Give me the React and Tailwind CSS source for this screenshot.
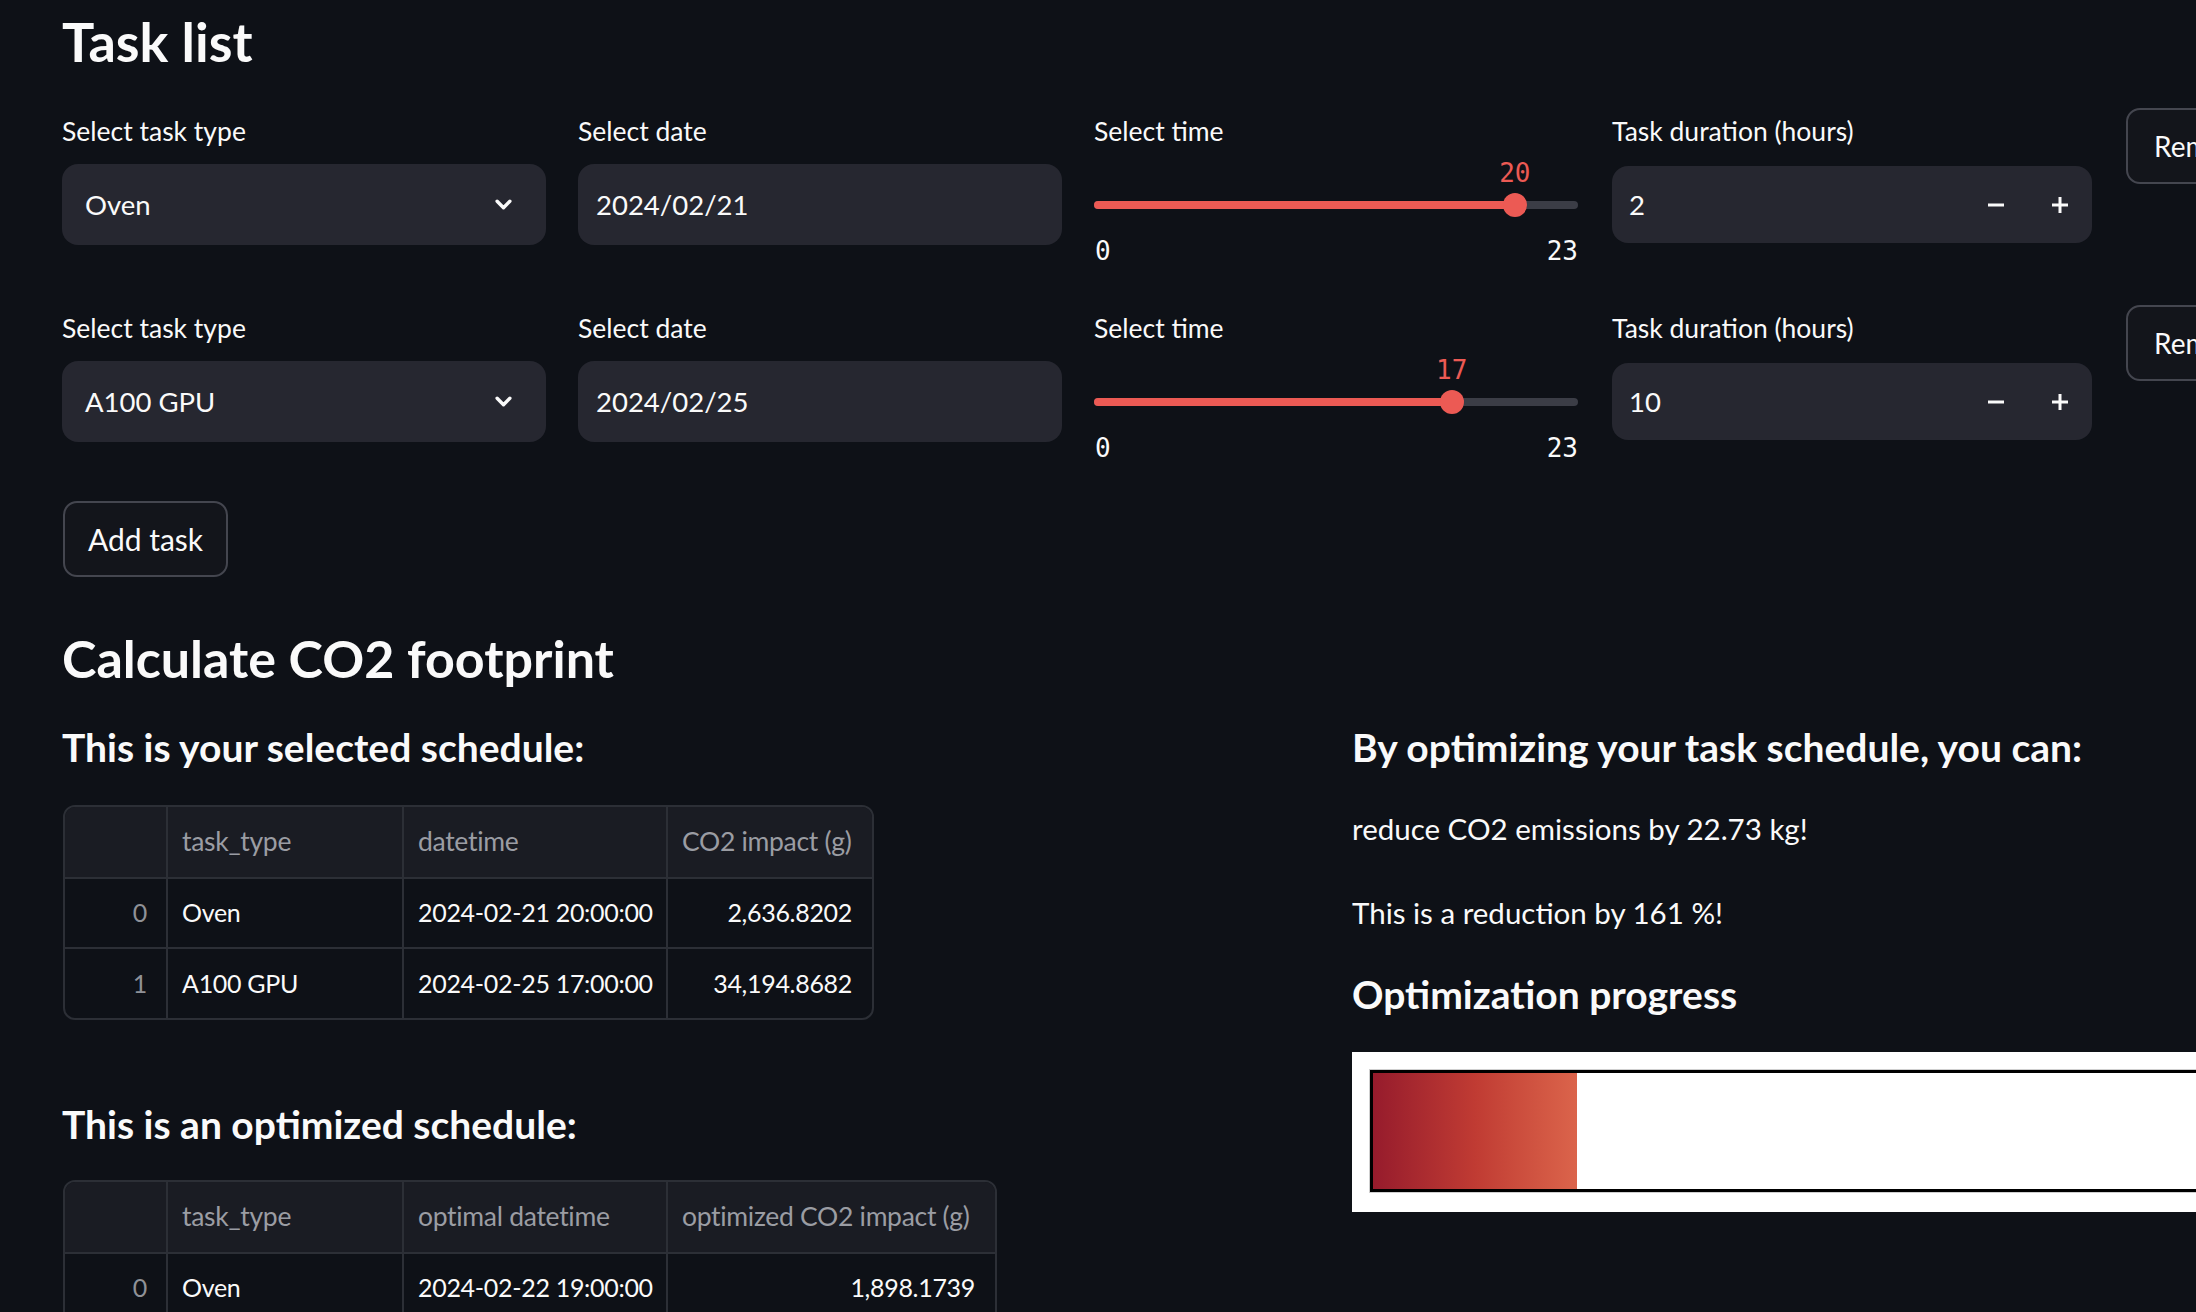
import React from "react";

const tasks = [
  { type: "Oven", date: "2024/02/21", time: 20, duration: 2 },
  { type: "A100 GPU", date: "2024/02/25", time: 17, duration: 10 },
];

const selectedCols = [
  { label: "", width: "w-[102px]", index: true },
  { label: "task_type", width: "w-[236px]" },
  { label: "datetime", width: "w-[264px]" },
  { label: "CO2 impact (g)", width: "w-[205px]", numeric: true },
];

const selectedRows = [
  ["0", "Oven", "2024-02-21 20:00:00", "2,636.8202"],
  ["1", "A100 GPU", "2024-02-25 17:00:00", "34,194.8682"],
];

const optimizedCols = [
  { label: "", width: "w-[102px]", index: true },
  { label: "task_type", width: "w-[236px]" },
  { label: "optimal datetime", width: "w-[264px]" },
  { label: "optimized CO2 impact (g)", width: "w-[328px]", numeric: true },
];

const optimizedRows = [
  ["0", "Oven", "2024-02-22 19:00:00", "1,898.1739"],
  ["1", "A100 GPU", "2024-02-26 03:00:00", "12,203.5145"],
];

function ChevronDown() {
  return (
    <svg viewBox="0 0 16 10" className="w-[17px] h-[11px]" fill="none" stroke="#fafafa" strokeWidth="3.2" strokeLinecap="round" strokeLinejoin="round">
      <path d="M2 2l6 6 6-6" />
    </svg>
  );
}

function MinusIcon() {
  return (
    <svg viewBox="0 0 16 16" className="w-[16px] h-[16px]" fill="#fafafa">
      <rect x="0" y="6.5" width="16" height="3" />
    </svg>
  );
}

function PlusIcon() {
  return (
    <svg viewBox="0 0 16 16" className="w-[16px] h-[16px]" fill="#fafafa">
      <rect x="0" y="6.5" width="16" height="3" />
      <rect x="6.5" y="0" width="3" height="16" />
    </svg>
  );
}

function Label({ children }) {
  return <div className="h-[40px] leading-[40px] text-[26.5px] whitespace-nowrap">{children}</div>;
}

function TimeSlider({ value, min = 0, max = 23 }) {
  const pct = ((value - min) / (max - min)) * 100;
  return (
    <div className="relative h-[120px] font-['DejaVu_Sans_Mono',monospace] text-[26px] leading-[30px]">
      <div className="absolute top-[7px] -translate-x-1/2 text-[#ec5a54]" style={{ left: `${pct}%` }}>
        {value}
      </div>
      <div className="absolute top-[50px] left-0 right-0 h-[8px] rounded-full bg-[#3b3d46]">
        <div className="h-full rounded-full bg-[#ec5a54]" style={{ width: `${pct}%` }} />
      </div>
      <div
        className="absolute top-[42px] w-[24px] h-[24px] -translate-x-1/2 rounded-full bg-[#ec5a54]"
        style={{ left: `${pct}%` }}
      />
      <div className="absolute top-[85px] left-[1px]">{min}</div>
      <div className="absolute top-[85px] right-0">{max}</div>
    </div>
  );
}

function TaskRow({ task }) {
  return (
    <div className="grid grid-cols-[484px_484px_484px_484px_484px] gap-[32px] items-start">
      <div>
        <Label>Select task type</Label>
        <div className="mt-[13px] h-[81px] rounded-[16px] bg-[#262730] flex items-center justify-between pl-[23px] pr-[34px] text-[27.5px]">
          <span>{task.type}</span>
          <ChevronDown />
        </div>
      </div>
      <div>
        <Label>Select date</Label>
        <div className="mt-[13px] h-[81px] rounded-[16px] bg-[#262730] flex items-center pl-[18px] text-[27.5px]">
          {task.date}
        </div>
      </div>
      <div>
        <Label>Select time</Label>
        <TimeSlider value={task.time} />
      </div>
      <div className="pl-[2px]">
        <Label>Task duration (hours)</Label>
        <div className="mt-[15px] h-[77px] w-[480px] rounded-[16px] bg-[#262730] flex items-center text-[27.5px]">
          <span className="flex-1 pl-[17px]">{task.duration}</span>
          <button className="w-[64px] h-full flex items-center justify-center">
            <MinusIcon />
          </button>
          <button className="w-[64px] h-full flex items-center justify-center">
            <PlusIcon />
          </button>
        </div>
      </div>
      <div className="mt-[-3px]">
        <button className="h-[76px] px-[26px] rounded-[14px] border-2 border-[#44464f] bg-[#13151b] text-[28px] whitespace-nowrap">
          Remove
        </button>
      </div>
    </div>
  );
}

function DataTable({ columns, rows }) {
  return (
    <div className="inline-block rounded-[12px] border-2 border-[#2c2f36] overflow-hidden">
      <table className="border-collapse text-[25px] tracking-[-0.3px]">
        <thead>
          <tr className="bg-[#1a1c23]">
            {columns.map((col, i) => (
              <th
                key={i}
                className={`${col.width} h-[71px] px-[14px] text-left font-normal text-[26.5px] text-[#9b9da3] whitespace-nowrap ${i > 0 ? "border-l-2 border-[#2c2f36]" : ""}`}
              >
                {col.label}
              </th>
            ))}
          </tr>
        </thead>
        <tbody>
          {rows.map((row, r) => (
            <tr key={r}>
              {row.map((cell, i) => {
                const col = columns[i];
                let cls = "h-[70px] border-t-2 border-[#2c2f36] whitespace-nowrap";
                if (i > 0) cls += " border-l-2";
                if (col.index) cls += " text-right pr-[19px] text-[#8f9197]";
                else if (col.numeric) cls += " text-right pr-[20px]";
                else cls += " pl-[14px]";
                return (
                  <td key={i} className={cls}>
                    {cell}
                  </td>
                );
              })}
            </tr>
          ))}
        </tbody>
      </table>
    </div>
  );
}

function SubHeading({ children, className = "" }) {
  return <h3 className={`text-[39px] leading-[48px] font-bold whitespace-nowrap ${className}`}>{children}</h3>;
}

export default function App() {
  return (
    <div className="w-[2196px] h-[1312px] overflow-hidden bg-[#0e1117] text-[#fafafa] font-['Lato',sans-serif]">
      <div className="w-[2610px] pl-[62px] pt-[10px]">
        <h1 className="text-[54px] leading-[64px] font-bold">Task list</h1>

        <div className="mt-[37px] flex flex-col gap-[37px]">
          {tasks.map((task, i) => (
            <TaskRow key={i} task={task} />
          ))}
        </div>

        <button className="block mt-[33px] ml-[1px] h-[76px] w-[165px] rounded-[14px] border-2 border-[#44464f] bg-[#13151b] text-[30px]">
          Add task
        </button>

        <h1 className="mt-[49px] text-[52px] leading-[64px] font-bold">Calculate CO2 footprint</h1>

        <div className="mt-[33px] grid grid-cols-[1258px_1258px] gap-[32px]">
          <div>
            <SubHeading>This is your selected schedule:</SubHeading>
            <div className="mt-[34px] ml-[1px]">
              <DataTable columns={selectedCols} rows={selectedRows} />
            </div>
            <SubHeading className="mt-[74px]">This is an optimized schedule:</SubHeading>
            <div className="mt-[32px] ml-[1px]">
              <DataTable columns={optimizedCols} rows={optimizedRows} />
            </div>
          </div>

          <div>
            <SubHeading>By optimizing your task schedule, you can:</SubHeading>
            <p className="mt-[36px] text-[29.5px] leading-[44px]">reduce CO2 emissions by 22.73 kg!</p>
            <p className="mt-[40px] text-[29.5px] leading-[44px]">This is a reduction by 161 %!</p>
            <SubHeading className="mt-[35px]">Optimization progress</SubHeading>
            <div className="mt-[34px] h-[160px] bg-white pt-[18px] pl-[18px]">
              <div className="h-[122px] border-[3px] border-black outline outline-1 outline-[#cfcfcf]">
                <div className="h-full w-[204px] bg-linear-to-r from-[#961b2c] via-[#c03b33] to-[#db644b]" />
              </div>
            </div>
          </div>
        </div>
      </div>
    </div>
  );
}
